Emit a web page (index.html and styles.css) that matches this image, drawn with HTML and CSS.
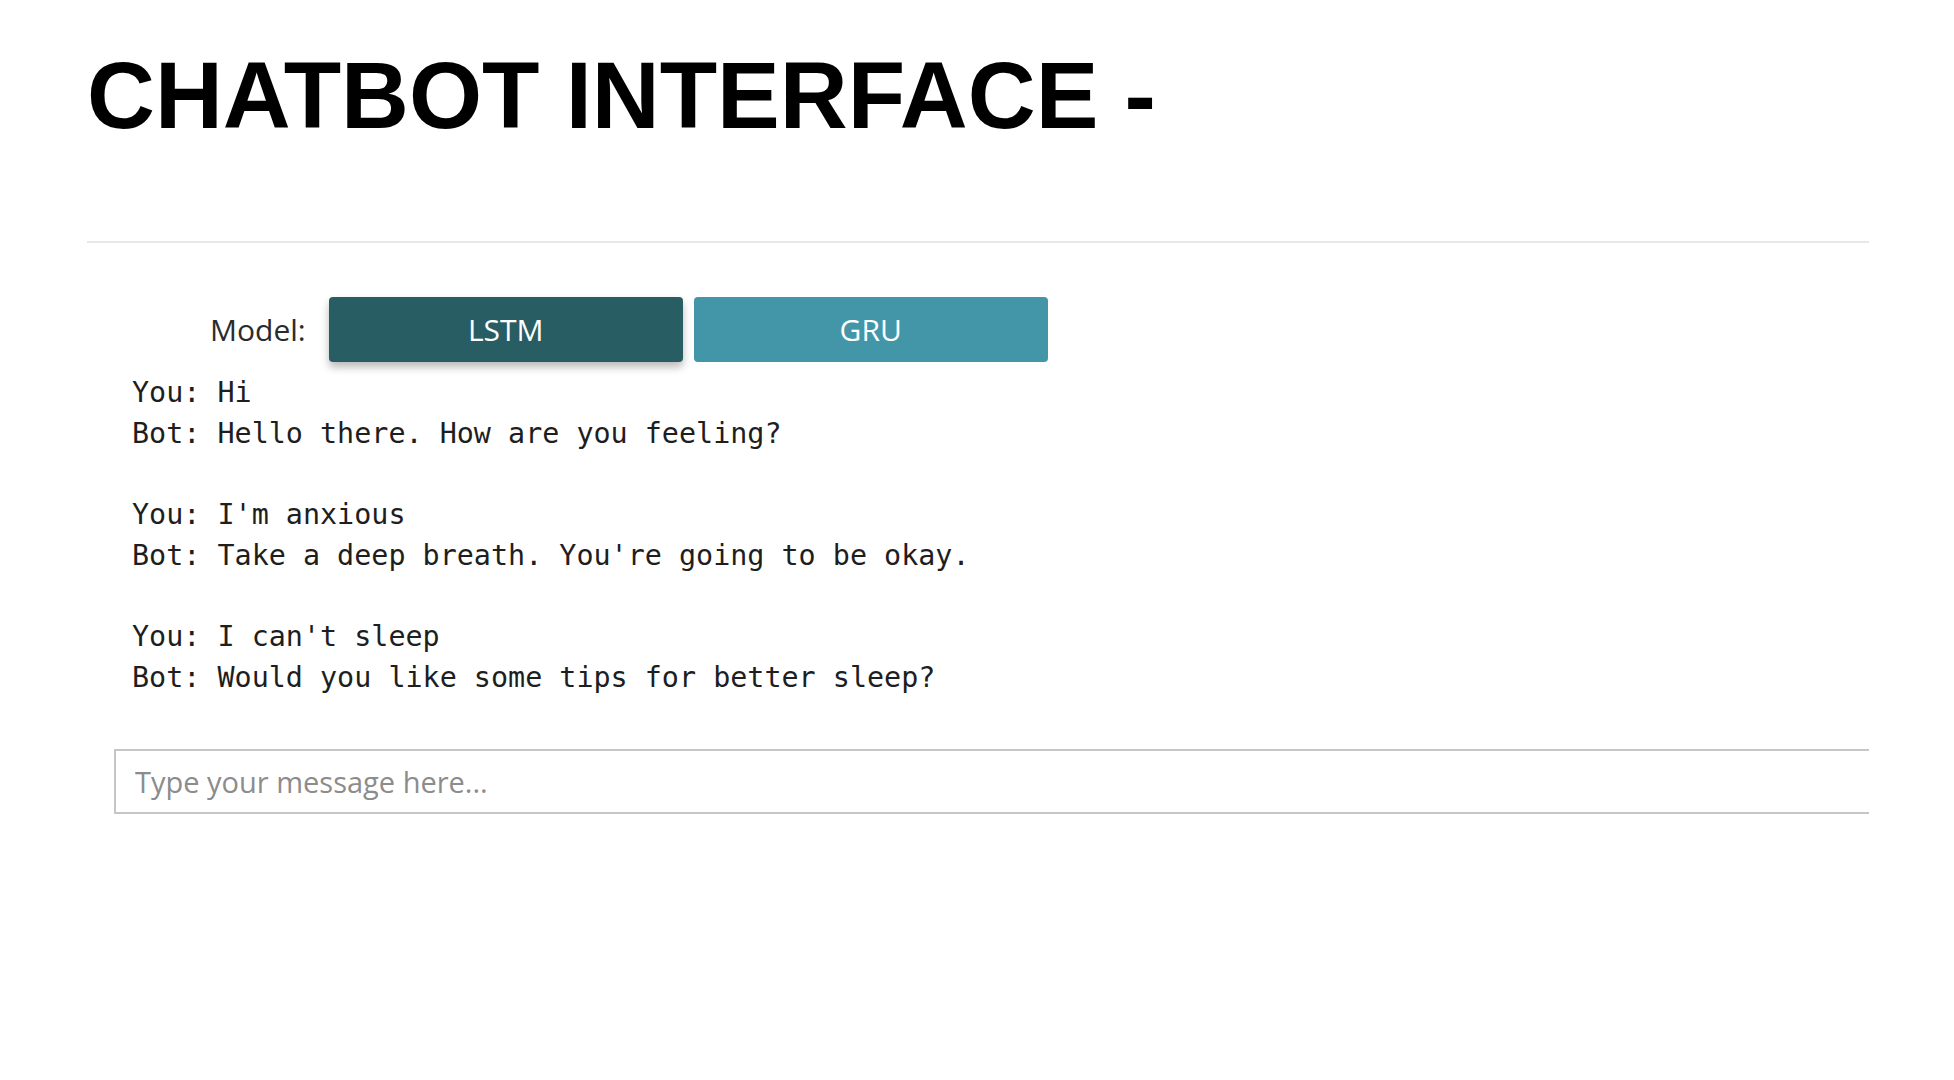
FILE: index.html
```html
<!DOCTYPE html>
<html lang="en">
<head>
<meta charset="utf-8">
<title>Chatbot Interface</title>
<link rel="stylesheet" href="styles.css">
</head>
<body>
<div class="page">
  <h1 class="title">CHATBOT INTERFACE -</h1>
  <hr class="rule">
  <div class="model-row">
    <span class="model-label">Model:</span>
    <button class="model-btn active" type="button">LSTM</button>
    <button class="model-btn" type="button">GRU</button>
  </div>
  <pre class="chat">You: Hi
Bot: Hello there. How are you feeling?

You: I'm anxious
Bot: Take a deep breath. You're going to be okay.

You: I can't sleep
Bot: Would you like some tips for better sleep?</pre>
  <div class="input-wrap">
    <input class="msg-input" type="text" placeholder="Type your message here...">
  </div>
</div>
</body>
</html>
```
FILE: styles.css
```css
html, body {
  margin: 0;
  padding: 0;
  background: #ffffff;
}

.page {
  padding: 0 85px 0 87px;
}

.title {
  margin: 42px 0 0 0;
  font-family: "Liberation Sans", Arial, sans-serif;
  font-weight: bold;
  font-size: 94px;
  line-height: normal;
  color: #000000;
  letter-spacing: 0;
}

.rule {
  margin: 91px 0 0 0;
  border: 0;
  border-top: 2px solid #e8e8e8;
  height: 0;
}

.model-row {
  display: flex;
  align-items: center;
  margin-top: 54px;
  padding-left: 123px;
  gap: 11px;
}

.model-label {
  font-family: "Open Sans", "Noto Sans", sans-serif;
  font-size: 30px;
  color: #2b2b2b;
  margin-right: 12px;
}

.model-btn {
  width: 354px;
  height: 65px;
  border: 0;
  border-radius: 4px;
  background: #4396a8;
  color: #ffffff;
  font-family: "Open Sans", "Noto Sans", sans-serif;
  font-size: 30px;
  padding: 0;
  cursor: pointer;
}

.model-btn.active {
  background: #285e63;
  box-shadow: 0 5px 9px rgba(0, 0, 0, 0.28);
}

.chat {
  margin: 11px 0 0 45px;
  font-family: "DejaVu Sans Mono", "Liberation Mono", monospace;
  font-size: 28.4px;
  line-height: 40.7px;
  color: #1e1e1e;
  white-space: pre;
}

.input-wrap {
  margin-top: 50px;
  padding-left: 27px;
  overflow: hidden;
}

.msg-input {
  display: block;
  box-sizing: border-box;
  width: 1900px;
  height: 65px;
  border: 2px solid #c6c6c6;
  border-radius: 0;
  padding: 0 0 0 19px;
  font-family: "Open Sans", "Noto Sans", sans-serif;
  font-size: 29px;
  color: #333333;
  background: #ffffff;
  outline: none;
}

.msg-input::placeholder {
  color: #8c8c8c;
}
```
